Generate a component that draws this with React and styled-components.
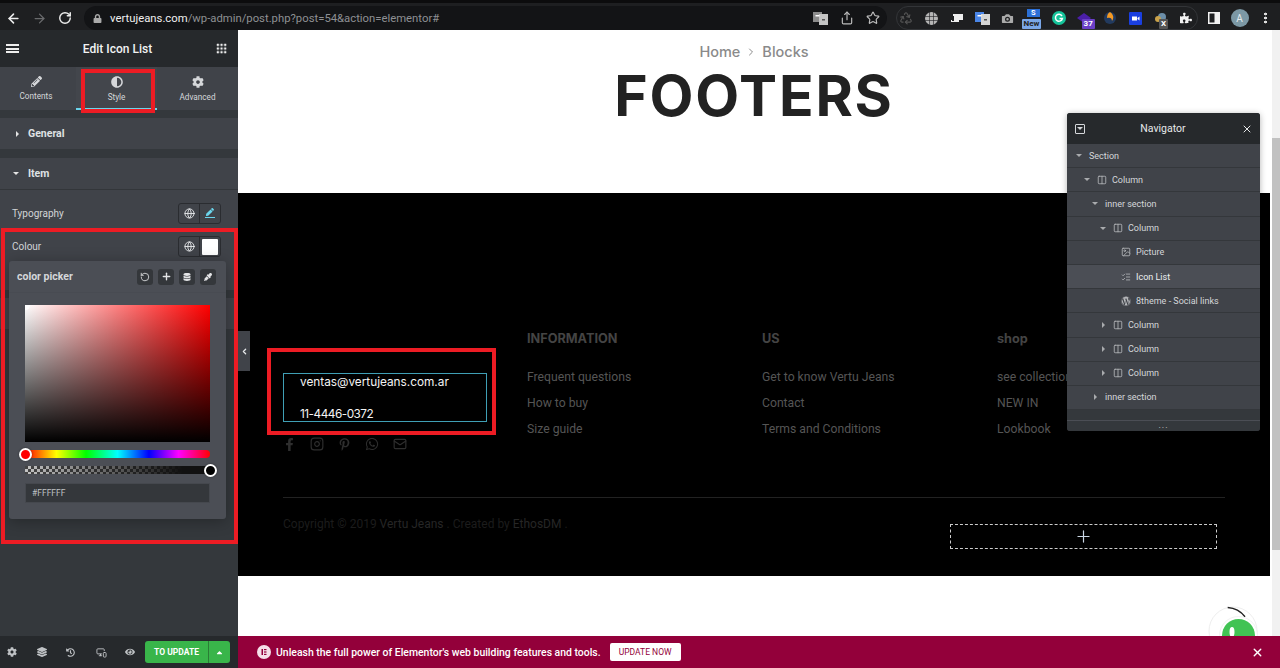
import React from "react";
import styled, { createGlobalStyle } from "styled-components";
import {
  ArrowLeft, ArrowRight, RotateCw, Share, Star, Recycle, Globe, Camera,
  RotateCcw, Plus, Columns2, Image, ListChecks, X, Instagram, Mail, MonitorSmartphone, ChevronLeft, ChevronRight,
} from "lucide-react";
import {
  FaLock, FaPencilAlt, FaAdjust, FaCog, FaDatabase, FaEyeDropper, FaLayerGroup, FaHistory, FaEye,
  FaFacebookF, FaPinterestP, FaWhatsapp, FaWordpress, FaPuzzlePiece, FaPen, FaCaretUp,
} from "react-icons/fa";

const Global = createGlobalStyle`
  html, body { margin: 0; padding: 0; height: 100%; overflow: hidden; background: #fff; }
  * { box-sizing: border-box; }
  body { font-family: Roboto, "Liberation Sans", sans-serif; }
`;

const Screen = styled.div`
  width: 1280px;
  height: 668px;
  display: flex;
  flex-direction: column;
  overflow: hidden;
`;

/* browser chrome */
const Chrome = styled.div`
  height: 30px;
  flex: none;
  background: #1e1f21;
  border-top: 3px solid #0c0c0d;
  display: flex;
  align-items: center;
  padding: 3px 0 0 1px;
  color: #e8e8e8;
`;
const NavBtn = styled.div`
  width: 25.7px;
  flex: none;
  display: flex;
  justify-content: center;
  color: ${(p) => (p.$off ? "#6a6b6d" : "#ececec")};
`;
const Address = styled.div`
  margin-left: 6px;
  width: 803px;
  height: 24px;
  flex: none;
  border-radius: 12px;
  background: #131416;
  display: flex;
  align-items: center;
  padding-left: 9px;
  font-size: 11.3px;
  color: #8e9093;
`;
const Host = styled.span`
  color: #f0f0f0;
  margin-left: 8px;
`;
const AddressTools = styled.div`
  margin-left: auto;
  display: flex;
  align-items: center;
  gap: 12px;
  padding-right: 7px;
  color: #bcbcbc;
`;
const ExtPill = styled.div`
  margin-left: 9px;
  width: 302px;
  height: 24px;
  border: 1px solid #333538;
  border-radius: 12px;
  display: flex;
  align-items: center;
  flex: none;
  & > :first-child { margin-left: -4px; }
`;
const Ext = styled.div`
  position: relative;
  width: 25.5px;
  height: 16px;
  flex: none;
  display: flex;
  justify-content: center;
  align-items: center;
  color: ${(p) => p.$c || "#bbb"};
`;
const ExtBadge = styled.span`
  position: absolute;
  left: ${(p) => p.$l}px;
  top: 9px;
  padding: 0 2px;
  height: 10px;
  line-height: 10px;
  font-size: 8px;
  font-weight: 700;
  color: ${(p) => p.$fg || "#fff"};
  background: ${(p) => p.$bg};
  border-radius: 1px;
`;
const ExtLetter = styled.span`
  align-self: flex-start;
  width: 13px;
  height: 8px;
  margin-top: -1px;
  background: #2b6fd6;
  color: #fff;
  font-size: 7.5px;
  line-height: 8px;
  font-weight: 700;
  text-align: center;
`;
const Avatar = styled.div`
  width: 18px;
  height: 18px;
  flex: none;
  border-radius: 50%;
  background: #7c98a5;
  color: #e4ecef;
  font-size: 10px;
  display: flex;
  align-items: center;
  justify-content: center;
  margin-left: 4px;
`;
const Dots = styled.div`
  margin-left: 15px;
  width: 3px;
  height: 12px;
  flex: none;
  background: radial-gradient(circle, #ddd 1.3px, transparent 1.6px) 0 0 / 3px 4px;
`;
const ChromeRight = styled.div`
  display: flex;
  align-items: center;
  margin-left: 3px;
`;

const Body = styled.div`
  flex: 1;
  display: flex;
  min-height: 0;
`;

/* elementor panel */
const Panel = styled.aside`
  position: relative;
  width: 238px;
  flex: none;
  background: #34383c;
  display: flex;
  flex-direction: column;
  color: #e6e8ea;
`;
const PanelHead = styled.div`
  height: 37px;
  flex: none;
  background: #26292c;
  display: flex;
  align-items: center;
  justify-content: space-between;
  padding: 0 6px;
  font-size: 12px;
  font-weight: 500;
  color: #f1f2f3;
`;
const Burger = styled.div`
  width: 13px;
  height: 9px;
  border-top: 2px solid #eee;
  border-bottom: 2px solid #eee;
  position: relative;
  &::after { content: ""; position: absolute; left: 0; right: 0; top: 1.5px; height: 2px; background: #eee; }
`;
const GridDots = styled.div`
  width: 11px;
  height: 11px;
  margin-right: 5px;
  background: radial-gradient(circle, #eee 1.3px, transparent 1.5px) 0 0 / 3.7px 3.7px;
`;
const Tabs = styled.div`
  height: 43px;
  flex: none;
  background: #404349;
  display: flex;
`;
const Tab = styled.div`
  position: relative;
  width: ${(p) => p.$w}px;
  padding: 9px ${(p) => p.$pr || 0}px 0 0;
  display: flex;
  flex-direction: column;
  align-items: center;
  gap: 3.5px;
  font-size: 8.2px;
  color: #d5d7da;
  background: ${(p) => (p.$on ? "#43464c" : "transparent")};
  border-bottom: ${(p) => (p.$on ? "2px solid #6bd5ec" : "0")};
`;
const RedBox = styled.div`
  position: absolute;
  pointer-events: none;
  border: 4px solid #ed1c24;
  top: ${(p) => p.$t}px;
  left: ${(p) => p.$l}px;
  right: ${(p) => p.$r}px;
  bottom: ${(p) => p.$bm}px;
  z-index: 5;
`;
const Section = styled.div`
  height: ${(p) => p.$h}px;
  flex: none;
  margin-top: ${(p) => p.$mt}px;
  background: #404349;
`;
const SectionHead = styled.div`
  height: ${(p) => p.$h || 31}px;
  display: flex;
  align-items: center;
  padding-left: 12px;
  font-size: 10.5px;
  font-weight: 700;
  color: #dfe1e3;
  border-bottom: ${(p) => (p.$line ? "1px solid #33363a" : "0")};
`;
const HeadCaret = styled.div`
  width: 16px;
  flex: none;
  padding-right: 9px;
  display: flex;
  justify-content: flex-end;
`;
const Caret = styled.span`
  display: inline-block;
  width: 0;
  height: 0;
  flex: none;
  border-style: solid;
  border-color: transparent;
  ${(p) =>
    p.$open
      ? `border-width: 3px 3px 0 3px; border-top-color: ${p.$c || "#e4e4e4"};`
      : `border-width: 3px 0 3px 3px; border-left-color: ${p.$c || "#e4e4e4"};`}
`;
const FieldRow = styled.div`
  height: ${(p) => p.$h}px;
  display: flex;
  align-items: center;
  justify-content: space-between;
  padding: 0 17px 0 12px;
  font-size: 10px;
  color: #d2d4d7;
`;
const Switcher = styled.div`
  display: flex;
  width: 43px;
  height: 21px;
  border: 1px solid #2a2c30;
  border-radius: 3px;
`;
const SwitchCell = styled.div`
  flex: 1;
  display: flex;
  align-items: center;
  justify-content: center;
  color: ${(p) => p.$c || "#e6e8ea"};
  border-left: ${(p) => (p.$split ? "1px solid #2a2c30" : "0")};
`;
const Swatch = styled.div`
  width: 16px;
  height: 16px;
  background: #fff;
  border-radius: 1px;
`;
const PenWrap = styled.div`
  display: flex;
  flex-direction: column;
  align-items: center;
  gap: 1px;
  &::after { content: ""; width: 10px; height: 1px; background: #6bd5ec; }
`;
const Picker = styled.div`
  position: absolute;
  left: 9px;
  top: 231px;
  width: 217px;
  height: 258px;
  background: #4b4e55;
  border-radius: 3px;
  box-shadow: 0 2px 15px rgba(0, 0, 0, 0.3);
  z-index: 3;
`;
const PickerHead = styled.div`
  height: 32px;
  display: flex;
  align-items: center;
  justify-content: space-between;
  padding: 0 10px 0 8px;
  font-size: 10.5px;
  font-weight: 700;
  color: #d5d7da;
  border-bottom: 1px solid #484b52;
`;
const PickerTools = styled.div`
  display: flex;
  gap: 5px;
`;
const ToolBtn = styled.div`
  width: 16px;
  height: 16px;
  border-radius: 3px;
  background: #34373b;
  color: #e3e4e6;
  display: flex;
  align-items: center;
  justify-content: center;
`;
const PickerBody = styled.div`
  padding: 12px 16px 0;
  display: flex;
  flex-direction: column;
`;
const Sat = styled.div`
  position: relative;
  overflow: hidden;
  height: 137px;
  background: linear-gradient(to top, #000, transparent), linear-gradient(to right, #fff, #f00);
`;
const SatDot = styled.div`
  position: absolute;
  left: -4px;
  top: -4px;
  width: 9px;
  height: 9px;
  border-radius: 50%;
  background: #fff;
`;
const Slider = styled.div`
  position: relative;
  height: 8px;
  margin-top: ${(p) => p.$mt}px;
  border-radius: ${(p) => (p.$hue ? "4px" : "0")};
  background: ${(p) =>
    p.$hue
      ? "linear-gradient(to right, #f00, #ff0 17%, #0f0 33%, #0ff 50%, #00f 67%, #f0f 83%, #f00)"
      : "linear-gradient(to right, transparent, #111 85%), repeating-conic-gradient(#c4c4c4 0 25%, #444 0 50%) 0 0 / 6px 6px"};
`;
const Knob = styled.div`
  position: absolute;
  top: -2.5px;
  ${(p) => (p.$end ? "right: -7px;" : "left: -6px;")}
  width: 13px;
  height: 13px;
  border-radius: 50%;
  border: 2px solid #fff;
  background: ${(p) => p.$c};
  box-shadow: 0 0 2px rgba(0, 0, 0, 0.5);
`;
const HexInput = styled.div`
  height: 20px;
  margin-top: 9px;
  background: #34373b;
  border: 1px solid #45484e;
  font-size: 8.5px;
  line-height: 18px;
  padding-left: 6px;
  color: #bfc1c4;
`;
const PanelFoot = styled.div`
  margin-top: auto;
  height: 32px;
  flex: none;
  background: #26292c;
  display: flex;
  align-items: center;
  padding-left: 6px;
  color: #bfc2c5;
`;
const FootIcon = styled.div`
  width: 29.5px;
  flex: none;
  display: flex;
  padding-left: 1px;
`;
const UpdateBtn = styled.div`
  margin-left: -8.5px;
  display: flex;
  height: 22px;
  width: 85px;
  flex: none;
  background: #39b54a;
  border-radius: 3px;
  color: #fff;
  font-size: 8.5px;
  font-weight: 700;
`;
const UpdateLabel = styled.div`
  flex: 1;
  display: flex;
  align-items: center;
  justify-content: center;
  border-right: 1px solid #2a7d35;
`;
const UpdateArrow = styled.div`
  width: 21px;
  display: flex;
  align-items: center;
  justify-content: center;
`;
const Collapse = styled.div`
  position: absolute;
  left: 238px;
  top: 301px;
  width: 12px;
  height: 40px;
  background: #404349;
  color: #e6e8ea;
  display: flex;
  align-items: center;
  justify-content: center;
  z-index: 4;
`;

/* preview */
const Right = styled.div`
  position: relative;
  flex: 1;
  min-width: 0;
  display: flex;
  flex-direction: column;
`;
const Viewport = styled.div`
  flex: 1;
  display: flex;
  min-height: 0;
`;
const Page = styled.main`
  flex: 1;
  background: #fff;
  display: flex;
  flex-direction: column;
`;
const PageHead = styled.header`
  height: 163px;
  flex: none;
  display: flex;
  flex-direction: column;
  align-items: center;
  padding-top: 13px;
`;
const Crumb = styled.div`
  display: flex;
  align-items: center;
  gap: 5px;
  font-family: Inter, sans-serif;
  font-size: 14.5px;
  font-weight: 500;
  color: #8a8a8a;
`;
const Title = styled.h1`
  margin: 3px 0 0;
  font-family: Inter, sans-serif;
  font-size: 57px;
  line-height: 66px;
  letter-spacing: 1.8px;
  font-weight: 700;
  color: #222;
`;
const Footer = styled.footer`
  height: 383px;
  flex: none;
  background: #000;
  padding: 137px 45px 0;
  display: flex;
  flex-direction: column;
`;
const FooterCols = styled.div`
  display: grid;
  grid-template-columns: 244px 235px 235px 1fr;
  height: 168px;
  border-bottom: 1px solid #222;
`;
const ContactCol = styled.div`
  padding-top: 43px;
`;
const ContactBox = styled.div`
  position: relative;
  width: 204px;
  height: 49px;
  border: 1px solid #3f9fb5;
  padding: 0 0 0 16px;
  font-family: Inter, sans-serif;
  font-size: 11.8px;
  color: #f4f4f4;
  display: flex;
  flex-direction: column;
  justify-content: space-between;
  line-height: 16px;
`;
const Phone = styled.span`
  letter-spacing: -0.5px;
  margin-bottom: -1px;
`;
const Socials = styled.div`
  display: flex;
  align-items: center;
  gap: 14px;
  margin-top: 15px;
  color: #2e2e2e;
`;
const ColTitle = styled.div`
  margin-top: 1px;
  font-family: Inter, sans-serif;
  font-size: 12.7px;
  font-weight: 700;
  color: #444;
  line-height: 16px;
`;
const ColLinks = styled.div`
  margin-top: 23px;
  display: flex;
  flex-direction: column;
  gap: 11px;
  font-size: 12.2px;
  line-height: 15px;
  color: #555;
`;
const BottomRow = styled.div`
  display: flex;
  justify-content: space-between;
  padding-top: 19px;
  font-size: 12px;
  color: #1c1c1c;
`;
const Strong = styled.span`
  color: #262626;
`;
const AddBox = styled.div`
  width: 267px;
  height: 25px;
  margin: 7px 8px 0 0;
  border: 1px dashed #ccc;
  display: flex;
  align-items: center;
  justify-content: center;
  color: #c9d6e4;
`;
const Scrollbar = styled.div`
  width: 10px;
  flex: none;
  background: #f1f1f1;
  border-left: 2px solid #fff;
  padding-top: 108px;
`;
const Thumb = styled.div`
  height: 412px;
  background: #c1c1c1;
`;
const Widget = styled.svg`
  position: absolute;
  left: 968px;
  top: 574px;
`;
const Banner = styled.div`
  position: relative;
  height: 32px;
  flex: none;
  background: #93003a;
  display: flex;
  align-items: center;
  padding: 0 16px 0 19px;
  color: #fff;
  font-size: 10.44px;
  font-weight: 500;
  z-index: 2;
`;
const BannerText = styled.span`
  margin-left: 5px;
`;
const BannerBtn = styled.div`
  margin-left: 9px;
  width: 71px;
  height: 18px;
  background: #fff;
  border-radius: 2px;
  color: #93003a;
  font-size: 8.5px;
  font-weight: 400;
  display: flex;
  align-items: center;
  justify-content: center;
`;
const BannerClose = styled.div`
  margin-left: auto;
  display: flex;
`;

/* navigator */
const Navigator = styled.div`
  position: absolute;
  left: 829px;
  top: 83px;
  width: 193px;
  height: 318px;
  background: #34383c;
  border-radius: 3px;
  box-shadow: 0 1px 6px rgba(0, 0, 0, 0.3);
  overflow: hidden;
  z-index: 3;
  color: #d5d7da;
  font-size: 9px;
`;
const NavHead = styled.div`
  height: 31px;
  background: #26292c;
  display: flex;
  align-items: center;
  justify-content: space-between;
  padding: 0 7px 0 8px;
  font-size: 10.5px;
  color: #e6e8ea;
`;
const NavDrop = styled.div`
  width: 10px;
  height: 10px;
  border: 1px solid #d5d7da;
  border-radius: 1px;
  display: flex;
  align-items: center;
  justify-content: center;
`;
const Row = styled.div`
  height: 24.2px;
  display: flex;
  align-items: center;
  padding-left: ${(p) => 9 + p.$level * 8}px;
  background: ${(p) => (p.$active ? "#4b4e55" : "#404349")};
  border-bottom: 1px solid #34373b;
  color: ${(p) => (p.$active ? "#eceef0" : "#d5d7da")};
`;
const CaretSlot = styled.div`
  width: 13px;
  flex: none;
  padding-right: 7px;
  display: flex;
  justify-content: center;
`;
const RowIcon = styled.div`
  width: 15px;
  flex: none;
  display: flex;
  color: #b5b7ba;
`;
const NavFoot = styled.div`
  position: absolute;
  left: 0;
  right: 0;
  bottom: 0;
  height: 11px;
  border-top: 1px solid #4b4e55;
  background: #34383c;
  text-align: center;
  line-height: 8px;
  letter-spacing: 1px;
  font-size: 9px;
  color: #ccc;
`;

const colIcon = <Columns2 size={10} strokeWidth={2} />;
const tree = [
  { level: 0, label: "Section", caret: "open" },
  { level: 1, label: "Column", caret: "open", icon: colIcon },
  { level: 2, label: "inner section", caret: "open" },
  { level: 3, label: "Column", caret: "open", icon: colIcon },
  { level: 4, label: "Picture", icon: <Image size={10} strokeWidth={2} /> },
  { level: 4, label: "Icon List", icon: <ListChecks size={10} strokeWidth={2} />, active: true },
  { level: 4, label: "8theme - Social links", icon: <FaWordpress size={10} /> },
  { level: 3, label: "Column", caret: "closed", icon: colIcon },
  { level: 3, label: "Column", caret: "closed", icon: colIcon },
  { level: 3, label: "Column", caret: "closed", icon: colIcon },
  { level: 2, label: "inner section", caret: "closed" },
];

const columns = [
  { title: "INFORMATION", links: ["Frequent questions", "How to buy", "Size guide"] },
  { title: "US", links: ["Get to know Vertu Jeans", "Contact", "Terms and Conditions"] },
  { title: "shop", links: ["see collection", "NEW IN", "Lookbook"] },
];

function TranslateIcon({ back, front }) {
  return (
    <svg width="15" height="14" viewBox="0 0 15 14">
      <rect x="0" y="1" width="9" height="10" fill={back} />
      <rect x="6" y="3" width="9" height="11" fill={front} />
      <rect x="2.5" y="4" width="4" height="1.5" fill="#fff" />
      <rect x="9" y="8" width="3" height="1.5" fill="#555" />
    </svg>
  );
}

function BrowserBar() {
  return (
    <Chrome>
      <NavBtn><ArrowLeft size={15} strokeWidth={2.5} /></NavBtn>
      <NavBtn $off><ArrowRight size={15} strokeWidth={2} /></NavBtn>
      <NavBtn><RotateCw size={14} strokeWidth={2.5} /></NavBtn>
      <Address>
        <FaLock size={9} color="#aaa" />
        <Host>vertujeans.com</Host>/wp-admin/post.php?post=54&amp;action=elementor#
        <AddressTools>
          <TranslateIcon back="#8c8c8c" front="#c4c4c4" />
          <Share size={14} />
          <Star size={14} />
        </AddressTools>
      </Address>
      <ExtPill>
        <Ext $c="#555"><Recycle size={14} /></Ext>
        <Ext>
          <svg width="13" height="13" viewBox="0 0 13 13">
            <circle cx="6.5" cy="6.5" r="6.5" fill="#b5b5b5" />
            <path d="M0 4.5h13M0 8.5h13M4.5 0v13M8.5 0v13" stroke="#1e1f21" strokeWidth="0.6" />
          </svg>
        </Ext>
        <Ext>
          <svg width="14" height="12" viewBox="0 0 14 12">
            <path d="M3 2h10v6H3zM1 8h8v2H1z" fill="#eee" />
            <rect x="2" y="4" width="2" height="5" fill="#1e1f21" />
          </svg>
        </Ext>
        <Ext><TranslateIcon back="#4a86e8" front="#d5d5d5" /></Ext>
        <Ext $c="#aaa"><Camera size={15} fill="#aaa" stroke="#1e1f21" /></Ext>
        <Ext>
          <ExtLetter>S</ExtLetter>
          <ExtBadge $l={1} $bg="#7aa7e8" $fg="#222">New</ExtBadge>
        </Ext>
        <Ext>
          <svg width="14" height="14" viewBox="0 0 14 14">
            <circle cx="7" cy="7" r="7" fill="#15c39a" />
            <path d="M10 5a3.5 3.5 0 1 0 .4 2.5H7.5" fill="none" stroke="#fff" strokeWidth="1.5" />
          </svg>
        </Ext>
        <Ext>
          <svg width="14" height="10" viewBox="0 0 14 10"><path d="M7 0l7 5-7 5-7-5z" fill="#4b1fa8" /></svg>
          <ExtBadge $l={10} $bg="#6a3fc8">37</ExtBadge>
        </Ext>
        <Ext>
          <svg width="12" height="14" viewBox="0 0 12 14">
            <circle cx="6" cy="7" r="6" fill="#223a5e" />
            <path d="M6 1a6 6 0 0 1 2 9C8 7 6 6 3 7c0-3 1-5 3-6z" fill="#f59a23" />
          </svg>
        </Ext>
        <Ext>
          <svg width="13" height="13" viewBox="0 0 13 13">
            <rect width="13" height="13" rx="1" fill="#1a3fe0" />
            <rect x="3" y="4.5" width="5" height="4" fill="#fff" />
            <path d="M8.5 6l2-1.5v4L8.5 7z" fill="#fff" />
          </svg>
        </Ext>
        <Ext>
          <svg width="12" height="10" viewBox="0 0 12 10">
            <circle cx="7" cy="4" r="4" fill="#6c8ea8" />
            <circle cx="3" cy="6" r="3" fill="#c9a24a" />
          </svg>
          <ExtBadge $l={11} $bg="#555">X</ExtBadge>
        </Ext>
        <Ext $c="#f2f2f2"><FaPuzzlePiece size={12} /></Ext>
      </ExtPill>
      <ChromeRight>
        <Ext>
          <svg width="12" height="12" viewBox="0 0 12 12">
            <rect x="0.75" y="0.75" width="10.5" height="10.5" fill="none" stroke="#f2f2f2" strokeWidth="1.5" />
            <rect x="6.5" y="1" width="5" height="10" fill="#f2f2f2" />
          </svg>
        </Ext>
        <Avatar>A</Avatar>
        <Dots />
      </ChromeRight>
    </Chrome>
  );
}

function ColorPicker() {
  return (
    <Picker>
      <PickerHead>
        <span>color picker</span>
        <PickerTools>
          <ToolBtn><RotateCcw size={10} /></ToolBtn>
          <ToolBtn><Plus size={11} strokeWidth={3} /></ToolBtn>
          <ToolBtn><FaDatabase size={8} /></ToolBtn>
          <ToolBtn><FaEyeDropper size={8} /></ToolBtn>
        </PickerTools>
      </PickerHead>
      <PickerBody>
        <Sat><SatDot /></Sat>
        <Slider $hue $mt={8}><Knob $c="#f00" /></Slider>
        <Slider $mt={8}><Knob $c="#000" $end /></Slider>
        <HexInput>#FFFFFF</HexInput>
      </PickerBody>
    </Picker>
  );
}

function SidePanel() {
  return (
    <Panel>
      <PanelHead>
        <Burger />
        <span>Edit Icon List</span>
        <GridDots />
      </PanelHead>
      <Tabs>
        <Tab $w={76} $pr={4}><FaPencilAlt size={11} />Contents</Tab>
        <Tab $w={81} $on><FaAdjust size={12} />Style</Tab>
        <Tab $w={81}><FaCog size={12} />Advanced</Tab>
      </Tabs>
      <Section $mt={8} $h={31}>
        <SectionHead><HeadCaret><Caret /></HeadCaret>General</SectionHead>
      </Section>
      <Section $mt={9} $h={132}>
        <SectionHead $h={32} $line><HeadCaret><Caret $open /></HeadCaret>Item</SectionHead>
        <FieldRow $h={46}>
          Typography
          <Switcher>
            <SwitchCell><Globe size={11} /></SwitchCell>
            <SwitchCell $split $c="#6bd5ec"><PenWrap><FaPen size={8} /></PenWrap></SwitchCell>
          </Switcher>
        </FieldRow>
        <FieldRow $h={21}>
          Colour
          <Switcher>
            <SwitchCell><Globe size={11} /></SwitchCell>
            <SwitchCell $split><Swatch /></SwitchCell>
          </Switcher>
        </FieldRow>
      </Section>
      <Section $mt={8} $h={31} />
      <RedBox $t={198} $l={1} $r={0} $bm={124} />
      <RedBox $t={39} $l={81} $r={83} $bm={555} />
      <ColorPicker />
      <PanelFoot>
        <FootIcon><FaCog size={10} /></FootIcon>
        <FootIcon><FaLayerGroup size={10} /></FootIcon>
        <FootIcon><FaHistory size={9} /></FootIcon>
        <FootIcon><MonitorSmartphone size={11} /></FootIcon>
        <FootIcon><FaEye size={10} /></FootIcon>
        <UpdateBtn>
          <UpdateLabel>TO UPDATE</UpdateLabel>
          <UpdateArrow><FaCaretUp size={9} /></UpdateArrow>
        </UpdateBtn>
      </PanelFoot>
      <Collapse><ChevronLeft size={9} strokeWidth={3.5} /></Collapse>
    </Panel>
  );
}

function NavTree() {
  return (
    <Navigator>
      <NavHead>
        <NavDrop><Caret $open $c="#d5d7da" /></NavDrop>
        <span>Navigator</span>
        <X size={12} strokeWidth={2} />
      </NavHead>
      {tree.map((r, i) => (
        <Row key={i} $level={r.level} $active={r.active}>
          <CaretSlot>{r.caret && <Caret $open={r.caret === "open"} $c="#a9abae" />}</CaretSlot>
          {r.icon && <RowIcon>{r.icon}</RowIcon>}
          {r.label}
        </Row>
      ))}
      <NavFoot>...</NavFoot>
    </Navigator>
  );
}

export default function App() {
  return (
    <Screen>
      <Global />
      <BrowserBar />
      <Body>
        <SidePanel />
        <Right>
          <Viewport>
            <Page>
              <PageHead>
                <Crumb>Home <ChevronRight size={12} /> Blocks</Crumb>
                <Title>FOOTERS</Title>
              </PageHead>
              <Footer>
                <FooterCols>
                  <ContactCol>
                    <ContactBox>
                      <span>ventas@vertujeans.com.ar</span>
                      <Phone>11-4446-0372</Phone>
                      <RedBox $t={-26} $l={-17} $r={-10} $bm={-14} />
                    </ContactBox>
                    <Socials>
                      <FaFacebookF size={13} />
                      <Instagram size={14} />
                      <FaPinterestP size={13} />
                      <FaWhatsapp size={14} />
                      <Mail size={14} />
                    </Socials>
                  </ContactCol>
                  {columns.map((c) => (
                    <div key={c.title}>
                      <ColTitle>{c.title}</ColTitle>
                      <ColLinks>
                        {c.links.map((l) => <span key={l}>{l}</span>)}
                      </ColLinks>
                    </div>
                  ))}
                </FooterCols>
                <BottomRow>
                  <span>Copyright © 2019 <Strong>Vertu Jeans</Strong> . Created by <Strong>EthosDM</Strong> .</span>
                  <AddBox><Plus size={19} strokeWidth={1.5} /></AddBox>
                </BottomRow>
              </Footer>
            </Page>
            <Scrollbar><Thumb /></Scrollbar>
          </Viewport>
          <Widget width="60" height="62" viewBox="0 0 60 62">
            <circle cx="27" cy="27" r="24" fill="none" stroke="#eee" strokeWidth="1" />
            <path d="M21.7 3.5A24 24 0 0 1 39 12.7" fill="none" stroke="#222" strokeWidth="1.5" />
            <circle cx="32.5" cy="31.5" r="19" fill="#fff" stroke="#f2f2f2" />
            <circle cx="32.5" cy="31.5" r="16.5" fill="#41c354" />
            <ellipse cx="26" cy="28" rx="2.5" ry="5" fill="#fff" />
          </Widget>
          <NavTree />
          <Banner>
            <svg width="14" height="14" viewBox="0 0 14 14">
              <circle cx="7" cy="7" r="7" fill="#f5dfe8" />
              <rect x="4.5" y="4" width="1.5" height="6" fill="#93003a" />
              <rect x="7" y="4" width="2.5" height="1.2" fill="#93003a" />
              <rect x="7" y="6.4" width="2.5" height="1.2" fill="#93003a" />
              <rect x="7" y="8.8" width="2.5" height="1.2" fill="#93003a" />
            </svg>
            <BannerText>Unleash the full power of Elementor's web building features and tools.</BannerText>
            <BannerBtn>UPDATE NOW</BannerBtn>
            <BannerClose><X size={13} strokeWidth={2.5} /></BannerClose>
          </Banner>
        </Right>
      </Body>
    </Screen>
  );
}
